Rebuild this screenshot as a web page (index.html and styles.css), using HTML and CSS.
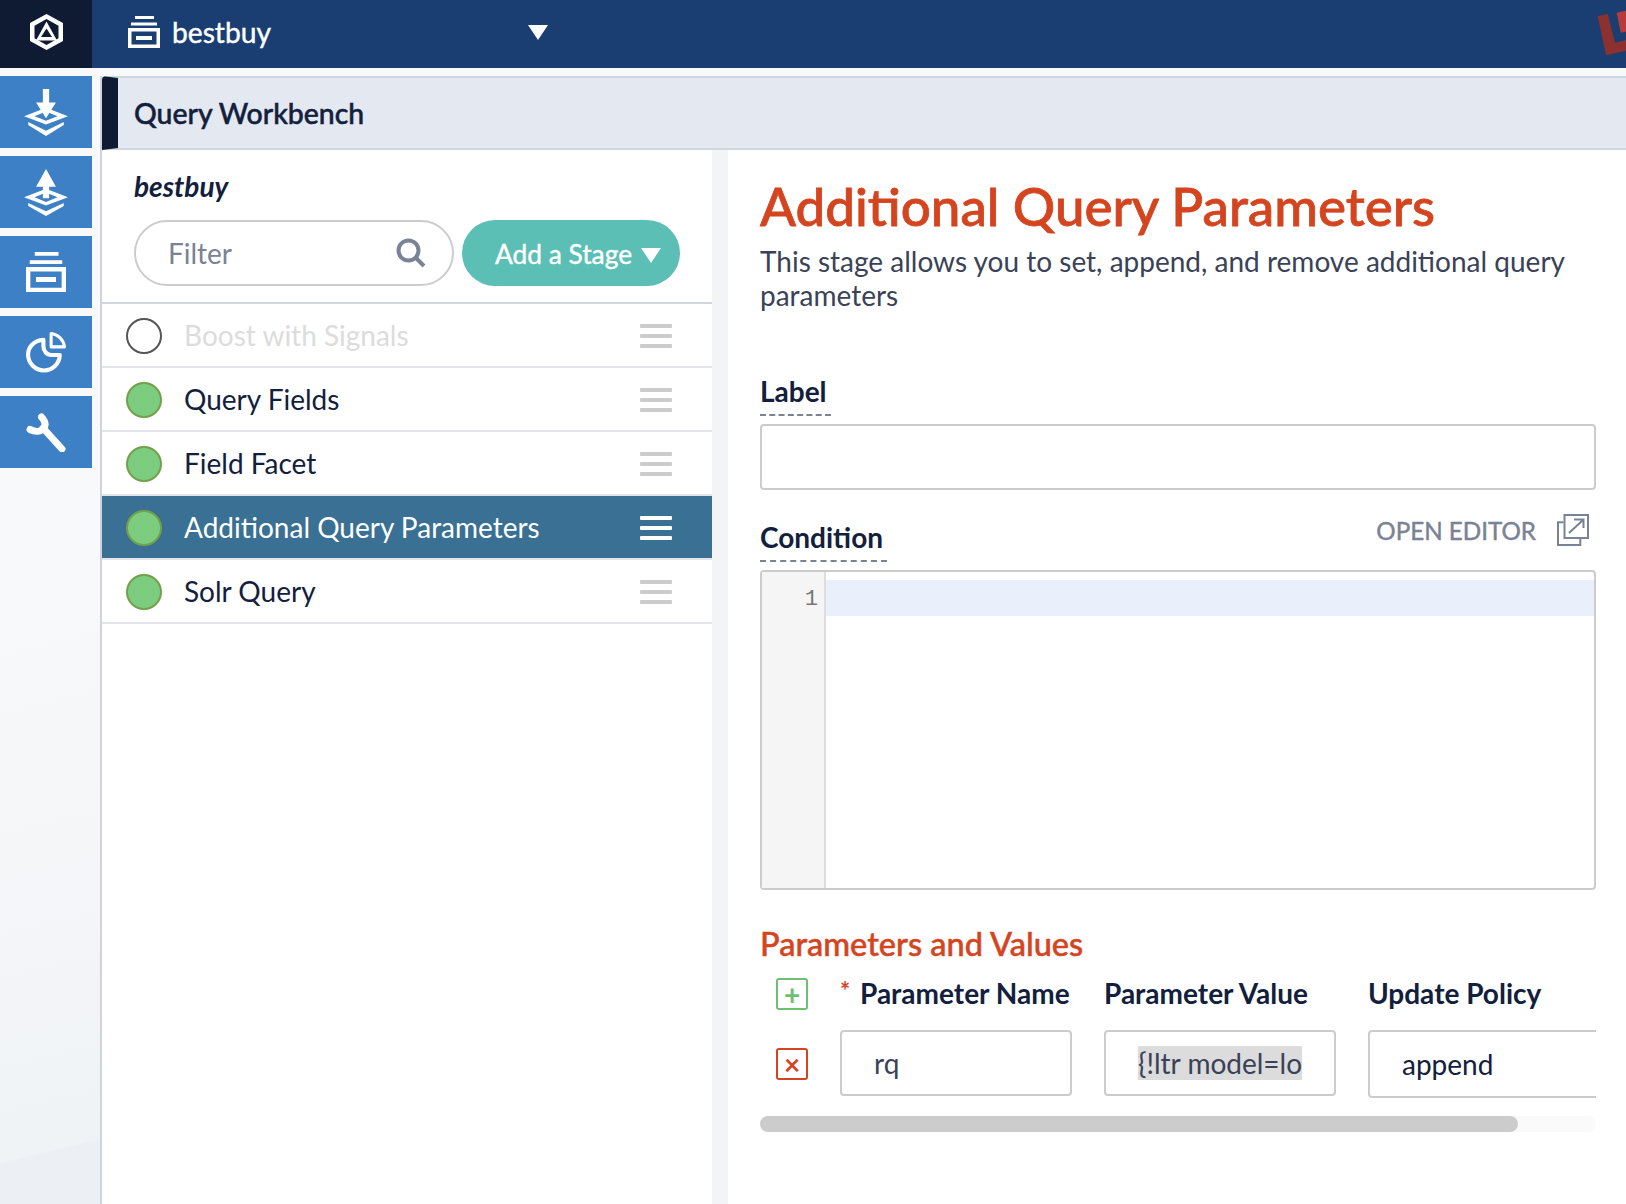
FILE: index.html
```html
<!DOCTYPE html>
<html lang="en">
  <head>
    <meta charset="UTF-8" />
    <meta name="viewport" content="width=device-width, initial-scale=1.0" />
    <link rel="stylesheet" href="styles.css">
    <title>Query Workbench</title>
  </head>
  <body>
    <header class="topbar">
      <div class="logo-cell">
        <svg width="33" height="36" viewBox="0 0 33 36">
          <path fill="#fff" fill-rule="evenodd" d="M16.500 0 33 9V27L16.500 36 0 27V9ZM16.500 5 4.500 11.800V24.200L16.500 31 28.500 24.200V11.800Z"/>
          <path fill="#fff" fill-rule="evenodd" d="M16.500 7.500 27 26.500H6ZM16.500 14.500 11 23H22Z"/>
        </svg>
      </div>
      <div class="app-picker">
        <svg class="stack-icon" width="32" height="32" viewBox="0 0 32 32">
          <path fill="#fff" d="M7 0H26V3H7ZM3 6.500H29V9.500H3Z"/>
          <path fill="#fff" fill-rule="evenodd" d="M0 12H32V32H0ZM3.500 15.500V28.500H28.500V15.500ZM8 20H24V24H8Z"/>
        </svg>
        <span class="app-name">bestbuy</span>
        <span class="caret"></span>
      </div>
      <svg class="corner-mark" width="30" height="60" viewBox="1596 0 30 60">
        <polygon fill="#8c3030" points="1597.700,16 1607.700,14 1615,42.700 1626,40 1626,50.700 1606,55.300"/>
        <polygon fill="#b83b3b" points="1616.700,12.700 1626,10.700 1626,31.700 1620.700,32.700"/>
      </svg>
    </header>

    <div class="layout">
      <nav class="sidebar">
        <a class="side-btn">
          <svg width="44" height="47" viewBox="0 0 42 45">
            <path fill="#fff" fill-rule="evenodd" d="M0 26 21 18 42 26 21 34ZM10 26 21 30.500 32 26 21 21.500Z"/>
            <path fill="#fff" d="M18 0H24V13H30.500L21 28 11.500 13H18Z"/>
            <path fill="#fff" d="M4 31.500 21 40 38 31.500V34.500L21 45 4 34.500Z"/>
          </svg>
        </a>
        <a class="side-btn">
          <svg width="44" height="47" viewBox="0 0 42 45">
            <path fill="#fff" fill-rule="evenodd" d="M0 27 21 19 42 27 21 35ZM10 27 21 31.500 32 27 21 22.500Z"/>
            <path fill="#fff" d="M21 0 30.500 17H24V28H18V17H11.500Z"/>
            <path fill="#fff" d="M4 32.500 21 40.500 38 32.500V35.500L21 45 4 35.500Z"/>
          </svg>
        </a>
        <a class="side-btn">
          <svg width="40" height="40" viewBox="0 0 32 32">
            <path fill="#fff" d="M7 0H26V3H7ZM3 6.500H29V9.500H3Z"/>
            <path fill="#fff" fill-rule="evenodd" d="M0 12H32V32H0ZM3.500 15.500V28.500H28.500V15.500ZM8 20H24V24H8Z"/>
          </svg>
        </a>
        <a class="side-btn">
          <svg width="41" height="41" viewBox="0 0 40 40">
            <path fill="none" stroke="#fff" stroke-width="3" stroke-linejoin="round" d="M24.500 1.500C31 2 37 8 37.500 14.500H24.500Z"/>
            <path fill="none" stroke="#fff" stroke-width="4" stroke-linejoin="round" d="M17 7.500C8 8 2 14.500 2 22 2 30.500 9 37.500 17.500 37.500 26 37.500 32.500 31 33 22.500H25C20 22.500 17 18.500 17 14Z"/>
          </svg>
        </a>
        <a class="side-btn">
          <svg width="40" height="40" viewBox="0 0 40 40">
            <g fill="none" stroke="#fff" stroke-width="7" stroke-linecap="round">
              <path d="M15.500 5C19 9 20 13 18 16 15 20 9 20 4 17.500"/>
              <path d="M17 16 36 37"/>
            </g>
          </svg>
        </a>
      </nav>

      <main class="panel">
        <div class="panel-header">
          <h1>Query Workbench</h1>
        </div>
        <div class="panel-body">
          <section class="stages">
            <div class="stages-top">
              <div class="pipeline-name">bestbuy</div>
              <div class="stage-tools">
                <div class="filter">
                  <span>Filter</span>
                  <svg width="30" height="30" viewBox="0 0 30 30">
                    <circle cx="12.500" cy="12.500" r="10" fill="none" stroke="#7a8296" stroke-width="4"/>
                    <path d="M20 20 28 28" stroke="#7a8296" stroke-width="4"/>
                  </svg>
                </div>
                <button class="add-stage">Add a Stage <span class="caret"></span></button>
              </div>
            </div>
            <ul class="stage-list">
              <li class="stage-row disabled"><span class="dot"></span><span class="stage-name">Boost with Signals</span><span class="grip"><i></i><i></i><i></i></span></li>
              <li class="stage-row"><span class="dot on"></span><span class="stage-name">Query Fields</span><span class="grip"><i></i><i></i><i></i></span></li>
              <li class="stage-row"><span class="dot on"></span><span class="stage-name">Field Facet</span><span class="grip"><i></i><i></i><i></i></span></li>
              <li class="stage-row selected"><span class="dot on"></span><span class="stage-name">Additional Query Parameters</span><span class="grip"><i></i><i></i><i></i></span></li>
              <li class="stage-row"><span class="dot on"></span><span class="stage-name">Solr Query</span><span class="grip"><i></i><i></i><i></i></span></li>
            </ul>
          </section>

          <section class="detail">
            <h2>Additional Query Parameters</h2>
            <p class="intro">This stage allows you to set, append, and remove additional query parameters</p>

            <label class="field-label label-first"><span>Label</span></label>
            <div class="text-box"></div>

            <div class="condition-head">
              <label class="field-label"><span>Condition</span></label>
              <div class="open-editor">
                OPEN EDITOR
                <svg width="32" height="32" viewBox="0 0 32 32">
                  <g fill="none" stroke="#7a8296" stroke-width="2">
                    <path d="M6.500 8.300H1V31H23.300V25"/>
                    <path d="M7.500 1H31V24H7.500Z"/>
                    <path d="M12 19 26 6M17 5.500H26.500V14"/>
                  </g>
                </svg>
              </div>
            </div>
            <div class="editor">
              <div class="gutter">1</div>
              <div class="code"><div class="active-line"></div></div>
            </div>

            <h3>Parameters and Values</h3>
            <div class="params-scroll">
              <div class="params">
                <div class="action-cell"><span class="square add">+</span></div>
                <div class="param-head"><span class="req">*</span>Parameter Name</div>
                <div class="param-head">Parameter Value</div>
                <div class="param-head">Update Policy</div>

                <div class="action-cell"><span class="square remove">×</span></div>
                <div class="param-input">rq</div>
                <div class="param-input"><span class="selected-text">{!ltr model=lo</span></div>
                <div class="param-input policy">append</div>
              </div>
            </div>
            <div class="scrollbar"><div class="thumb"></div></div>
          </section>
        </div>
      </main>
    </div>
  </body>
</html>
```

FILE: styles.css
```css
* {
  box-sizing: border-box;
}
html,
body {
  height: 100%;
}
body {
  margin: 0;
  height: 1204px;
  overflow: hidden;
  font-family: Lato, "Open Sans", sans-serif;
  color: #12203d;
  background: #f8f9fb;
}

.topbar {
  position: relative;
  display: flex;
  height: 68px;
  background: #1a3e72;
  overflow: hidden;
}
.logo-cell {
  display: flex;
  align-items: center;
  justify-content: center;
  width: 92px;
  padding-bottom: 4px;
  background: #0f1a33;
}
.app-picker {
  display: flex;
  align-items: center;
  padding: 0 0 4px 36px;
  width: 456px;
  color: #fff;
}
.stack-icon {
  margin-right: 12px;
}
.app-name {
  font-size: 28.2px;
  -webkit-text-stroke: 0.4px #fff;
}
.caret {
  display: inline-block;
  width: 0;
  height: 0;
  border-left: 10px solid transparent;
  border-right: 10px solid transparent;
  border-top: 15px solid #fff;
}
.app-picker .caret {
  margin-left: auto;
}
.corner-mark {
  position: absolute;
  top: 0;
  right: 0;
}

.layout {
  display: flex;
  height: 1136px;
  padding-top: 8px;
}
.sidebar {
  display: flex;
  flex-direction: column;
  gap: 8px;
  width: 100px;
  padding-right: 8px;
  margin-top: -8px;
  padding-top: 8px;
  background:
    linear-gradient(-13.5deg, #eceff3 0, #eceff3 62px, #f0f3f6 64px, rgba(240, 243, 246, 0) 620px),
    #f8f9fb;
}
.side-btn {
  display: flex;
  align-items: center;
  justify-content: center;
  height: 72px;
  background: #3d80c6;
}

.panel {
  flex: 1;
  display: flex;
  flex-direction: column;
  min-width: 0;
  border-left: 2px solid #ced4df;
  background: #fff;
}
.panel-header {
  height: 74px;
  padding-left: 16px;
  border-top: 2px solid #ced6df;
  border-bottom: 2px solid #d0d5de;
  border-left: 16px solid #0f1a33;
  border-top-left-radius: 4px;
  background: #e4e8f0;
}
.panel-header h1 {
  margin: 0;
  font-size: 28.4px;
  font-weight: 500;
  line-height: 70px;
  -webkit-text-stroke: 0.5px #12203d;
}
.panel-body {
  flex: 1;
  display: flex;
  min-height: 0;
}

.stages {
  width: 626px;
  border-right: 16px solid #f3f4f6;
}
.stages-top {
  height: 152px;
  padding: 17px 32px 0 32px;
}
.pipeline-name {
  font-size: 28px;
  font-style: italic;
  font-weight: 700;
  line-height: 38px;
}
.stage-tools {
  display: flex;
  gap: 8px;
  margin-top: 15px;
}
.filter {
  display: flex;
  align-items: center;
  justify-content: space-between;
  width: 320px;
  height: 66px;
  padding: 0 26px 0 32px;
  border: 2px solid #ccc;
  border-radius: 33px;
  font-size: 28px;
  color: #7a8296;
}
.add-stage {
  display: flex;
  align-items: center;
  gap: 9px;
  width: 218px;
  height: 66px;
  padding: 2px 0 0 33px;
  border: 0;
  border-radius: 33px;
  background: #5bbfb5;
  color: #fff;
  font-family: inherit;
  font-size: 26.3px;
  -webkit-text-stroke: 0.4px #fff;
}
.add-stage .caret {
  margin-top: 2px;
}

.stage-list {
  margin: 0;
  padding: 0;
  list-style: none;
  border-top: 2px solid #d0d5de;
}
.stage-row {
  display: flex;
  align-items: center;
  height: 64px;
  padding: 1px 40px 0 24px;
  border-bottom: 2px solid #e4e5e8;
  font-size: 28px;
}
.dot {
  width: 36px;
  height: 36px;
  margin-right: 22px;
  border: 2px solid #555;
  border-radius: 50%;
}
.dot.on {
  background: #7ccd80;
  border-color: #73a04a;
}
.stage-name {
  flex: 1;
  margin-top: -2px;
}
.grip {
  display: flex;
  flex-direction: column;
  gap: 6px;
  width: 32px;
}
.grip i {
  height: 4px;
  border-radius: 1px;
  background: #ccc;
}
.disabled .stage-name {
  color: #dcdcdc;
}
.selected {
  background: #397093;
  color: #fff;
}
.selected .grip i {
  background: #fff;
}

.detail {
  flex: 1;
  min-width: 0;
  padding: 26px 30px 0 32px;
}
.detail h2 {
  margin: 0;
  color: #d4451f;
  font-size: 52.9px;
  font-weight: 500;
  line-height: 60px;
  -webkit-text-stroke: 0.8px #d4451f;
}
.intro {
  margin: 8px 0 0;
  color: #3a4258;
  font-size: 28px;
  line-height: 34px;
}
.field-label {
  display: block;
  font-size: 28px;
  font-weight: 700;
  line-height: 34px;
}
.field-label span {
  display: inline-block;
  padding: 0 4px 6px 0;
  border-bottom: 2px dashed #7a8296;
}
.label-first {
  margin-top: 62px;
}
.text-box {
  height: 66px;
  margin-top: 8px;
  border: 2px solid #ccc;
  border-radius: 4px;
}
.condition-head {
  display: flex;
  align-items: flex-start;
  justify-content: space-between;
  margin-top: 30px;
}
.open-editor {
  display: flex;
  align-items: center;
  gap: 21px;
  margin: -6px 7px 0 0;
  color: #7a8296;
  font-size: 24.2px;
  -webkit-text-stroke: 0.45px #7a8296;
}
.editor {
  display: flex;
  height: 320px;
  margin-top: 8px;
  border: 2px solid #ccc;
  border-radius: 4px;
}
.gutter {
  width: 64px;
  padding: 16px 6px 0 0;
  background: #f5f5f5;
  border-right: 2px solid #ddd;
  color: #777;
  font-size: 22px;
  line-height: 24px;
  font-family: "Liberation Mono", monospace;
  text-align: right;
}
.code {
  flex: 1;
  padding-top: 8px;
}
.active-line {
  height: 36px;
  background: #e9f0fb;
}
.detail h3 {
  margin: 34px 0 0;
  color: #d4451f;
  font-size: 32.5px;
  font-weight: 500;
  line-height: 40px;
  -webkit-text-stroke: 0.5px #d4451f;
}
.params-scroll {
  overflow: hidden;
}
.params {
  display: grid;
  grid-template-columns: 48px 232px 232px 300px;
  grid-template-rows: 66px 68px;
  column-gap: 32px;
  width: 900px;
}
.action-cell {
  display: flex;
  align-items: center;
  padding-left: 16px;
}
.square {
  display: flex;
  align-items: center;
  justify-content: center;
  width: 32px;
  height: 32px;
  border: 2px solid;
  border-radius: 3px;
  font-size: 28px;
  font-weight: 700;
  line-height: 1;
}
.add {
  margin-bottom: 6px;
  color: #6cc070;
}
.remove {
  color: #d4451f;
}
.param-head {
  display: flex;
  align-items: center;
  padding-bottom: 8px;
  font-size: 28px;
  font-weight: 700;
}
.req {
  width: 20px;
  margin-top: -6px;
  color: #d4451f;
  font-size: 24px;
}
.param-input {
  display: flex;
  align-items: center;
  height: 66px;
  padding-left: 32px;
  border: 2px solid #ccc;
  border-radius: 4px;
  color: #3a4258;
  font-size: 28px;
}
.selected-text {
  background: #dcdcdc;
  white-space: nowrap;
}
.policy {
  height: 68px;
  color: #12203d;
}
.scrollbar {
  height: 16px;
  margin-top: 18px;
  border-radius: 8px;
  background: #fafafa;
}
.thumb {
  width: 758px;
  height: 16px;
  border-radius: 8px;
  background: #ccc;
}
```
